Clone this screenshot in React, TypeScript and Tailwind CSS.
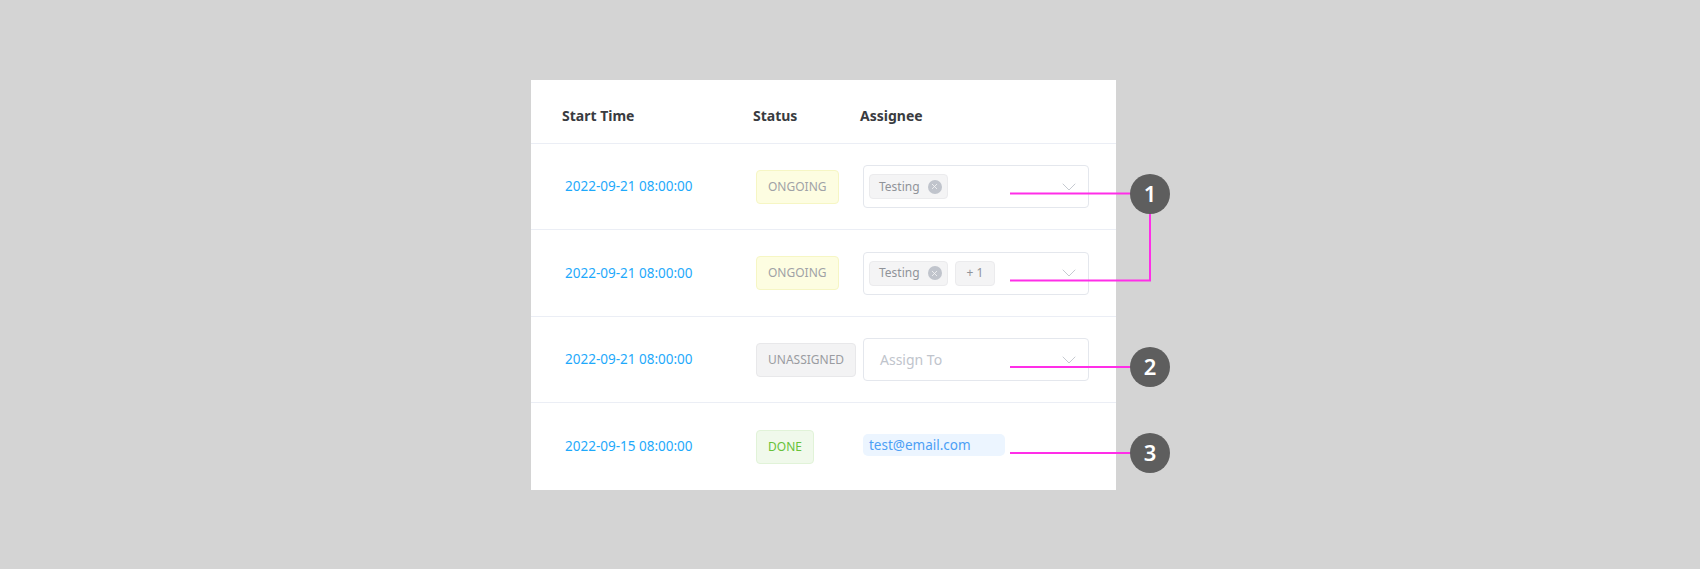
import { ChevronDown, X } from 'lucide-react'

type Status = 'ONGOING' | 'UNASSIGNED' | 'DONE'

interface Task {
  startTime: string
  status: Status
  assignees: string[]
  editable: boolean
}

const tasks: Task[] = [
  { startTime: '2022-09-21 08:00:00', status: 'ONGOING', assignees: ['Testing'], editable: true },
  { startTime: '2022-09-21 08:00:00', status: 'ONGOING', assignees: ['Testing', 'Dev'], editable: true },
  { startTime: '2022-09-21 08:00:00', status: 'UNASSIGNED', assignees: [], editable: true },
  { startTime: '2022-09-15 08:00:00', status: 'DONE', assignees: ['test@email.com'], editable: false },
]

const statusStyles: Record<Status, string> = {
  ONGOING: 'bg-[#fdfde1] border-[#f6f6c4] text-[#a0a2a6]',
  UNASSIGNED: 'bg-[#f3f3f4] border-[#e8e8ea] text-[#9a9ca1]',
  DONE: 'bg-[#f0f9eb] border-[#e1f3d8] text-[#67c23a]',
}

const font = { fontFamily: '"Noto Sans", "Open Sans", sans-serif' }

function StatusBadge({ status }: { status: Status }) {
  return (
    <span
      className={`inline-flex h-[34px] items-center rounded-[4px] border px-[11px] text-[12px] ${statusStyles[status]}`}
    >
      {status}
    </span>
  )
}

function Tag({ label, closable }: { label: string; closable?: boolean }) {
  return (
    <span
      className={`inline-flex h-[25px] items-center gap-[8px] rounded-[4px] border border-[#ebebed] bg-[#f4f4f5] text-[12px] text-[#909399] ${
        closable ? 'pl-[9px] pr-[5px]' : 'px-[11px]'
      }`}
    >
      {label}
      {closable && (
        <span className="flex h-[14px] w-[14px] items-center justify-center rounded-full bg-[#c0c4cc]">
          <X size={9} strokeWidth={2.2} className="text-[#f4f4f5]" />
        </span>
      )}
    </span>
  )
}

function AssigneeSelect({ assignees }: { assignees: string[] }) {
  return (
    <div className="flex h-[43px] w-[226px] items-center rounded-[4px] border border-[#e4e7ed] bg-white pl-[5px] pr-[7px]">
      <div className="flex flex-1 items-center gap-[7px]">
        {assignees.length === 0 ? (
          <span className="pl-[11px] text-[14px] text-[#c0c4cc]">Assign To</span>
        ) : (
          <>
            <Tag label={assignees[0]} closable />
            {assignees.length > 1 && <Tag label={`+ ${assignees.length - 1}`} />}
          </>
        )}
      </div>
      <ChevronDown size={24} strokeWidth={0.9} className="text-[#c0c4cc]" />
    </div>
  )
}

function Callouts() {
  const pink = '#ff2ee8'
  return (
    <svg className="absolute left-0 top-0" width={1700} height={569}>
      <g stroke={pink} strokeWidth={2} fill="none">
        <line x1={1010} y1={193.5} x2={1140} y2={193.5} />
        <polyline points="1010,280.5 1150,280.5 1150,200" />
        <line x1={1010} y1={367} x2={1140} y2={367} />
        <line x1={1010} y1={453} x2={1140} y2={453} />
      </g>
      {[
        { n: '1', cy: 194 },
        { n: '2', cy: 367 },
        { n: '3', cy: 453 },
      ].map((c) => (
        <g key={c.n}>
          <circle cx={1150} cy={c.cy} r={20} fill="#5e5e5e" />
          <text
            x={1150}
            y={c.cy + 8}
            textAnchor="middle"
            fill="#fff"
            fontSize={22}
            fontWeight={600}
            fontFamily='"Noto Sans", sans-serif'
          >
            {c.n}
          </text>
        </g>
      ))}
    </svg>
  )
}

export default function App() {
  return (
    <div className="relative h-[569px] w-[1700px] bg-[#d4d4d4] pl-[531px] pt-[80px]" style={font}>
      <div className="w-[585px] bg-white">
        <div className="flex h-[64px] border-b border-[#ebeef5] pt-[25px] text-[14px] font-bold leading-[21px] text-[#393b40]">
          <div className="w-[222px] pl-[31px]">Start Time</div>
          <div className="w-[107px]">Status</div>
          <div>Assignee</div>
        </div>
        {tasks.map((t, i) => (
          <div
            key={i}
            className={`flex items-center ${i % 2 === 0 ? 'h-[86px]' : 'h-[87px]'} ${
              i < tasks.length - 1 ? 'border-b border-[#ebeef5]' : ''
            }`}
          >
            <div className="w-[225px] pl-[34px] text-[13.5px] text-[#1ea9fb]">{t.startTime}</div>
            <div className="w-[107px]">
              <StatusBadge status={t.status} />
            </div>
            <div>
              {t.editable ? (
                <AssigneeSelect assignees={t.assignees} />
              ) : (
                <span className="-mt-[3px] flex h-[22px] w-[142px] items-center rounded-[5px] bg-[#ecf5ff] pl-[6px] text-[13.5px] text-[#4c9ff5]">
                  {t.assignees[0]}
                </span>
              )}
            </div>
          </div>
        ))}
      </div>
      <Callouts />
    </div>
  )
}
